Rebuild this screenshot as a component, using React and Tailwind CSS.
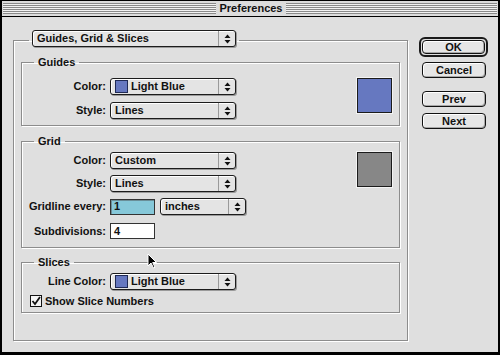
import React from 'react'

const font = { fontFamily: '"Liberation Sans", Arial, sans-serif' }

function Arrows() {
  return (
    <svg width="7" height="10" viewBox="0 0 7 10" className="block">
      <polygon points="0.5,4 3.5,0.5 6.5,4" fill="#111" />
      <polygon points="0.5,6 3.5,9.5 6.5,6" fill="#111" />
    </svg>
  )
}

function Popup({ width, swatch, children }) {
  return (
    <div
      className="h-[17px] flex items-stretch border border-[#1c1c1c] rounded-[3px] bg-[#e4e4e4] shadow-[inset_1px_1px_0_#fff,1px_1px_0_#9a9a9a]"
      style={{ width }}
    >
      <div className="flex-1 flex items-center pl-[4px] gap-[2px] text-[11px] font-bold text-[#111] leading-none">
        {swatch && <span className="w-[13px] h-[13px] bg-[#6678c0] border border-[#1f2a55] mr-[1px]" />}
        {children}
      </div>
      <div className="w-[17px] border-l border-[#9a9a9a] flex items-center justify-center">
        <Arrows />
      </div>
    </div>
  )
}

function Button({ children }) {
  return (
    <div className="h-[16px] w-[64px] border border-[#111] rounded-[4px] bg-[#e6e6e6] shadow-[inset_1px_1px_0_#fff,inset_-1px_-1px_0_#a8a8a8] flex items-center justify-center text-[11px] font-bold text-[#111] leading-none">
      {children}
    </div>
  )
}

function Row({ label, children, className = '' }) {
  return (
    <div className={`flex items-center ${className}`}>
      <div className="w-[85px] text-right text-[11px] font-bold text-[#111] leading-none pr-[1px]">{label}</div>
      <div className="ml-[3px] flex items-center">{children}</div>
    </div>
  )
}

function Group({ title, className = '', children }) {
  return (
    <fieldset className={`border border-[#8c8c8c] shadow-[1px_1px_0_#fff,inset_1px_1px_0_#fff] ${className}`}>
      <legend className="ml-[12px] px-[4px] text-[11px] font-bold text-[#111] leading-[13px] h-[13px]">{title}</legend>
      {children}
    </fieldset>
  )
}

function Swatch({ color }) {
  return (
    <div className={`w-[35px] h-[35px] border border-[#1b1b1b] shadow-[0_0_0_1px_#f4f4f4] ${color}`} />
  )
}

function TitleBar() {
  const stripes = 'bg-[image:repeating-linear-gradient(to_bottom,#8a8a8a_0,#8a8a8a_1px,#f2f2f2_1px,#f2f2f2_2px)]'
  return (
    <div className="h-[16px] border-b border-black bg-[#dcdcdc] flex items-center">
      <div className={`ml-[1px] w-[213px] h-[11px] ${stripes}`} />
      <div className="w-[70px] text-center text-[11px] font-bold text-[#111] leading-none">Preferences</div>
      <div className={`flex-1 mr-[1px] h-[11px] ${stripes}`} />
    </div>
  )
}

export default function App() {
  return (
    <div className="relative w-[500px] h-[355px] border-t border-x-2 border-b-[3px] border-black bg-[#dfdfdf] flex flex-col" style={font}>
      <TitleBar />
      <div className="flex flex-1">
        <fieldset className="ml-[11px] mt-[13px] w-[395px] h-[311px] px-[7px] border border-[#8c8c8c] shadow-[1px_1px_0_#fff,inset_1px_1px_0_#fff]">
          <legend className="ml-[8px] px-[3px] pb-[3px]">
            <Popup width={204}>Guides, Grid &amp; Slices</Popup>
          </legend>

          <Group title="Guides" className="mt-[6px] pt-[9px] pb-[6px]">
            <div className="flex">
              <div>
                <Row label="Color:"><Popup width={126} swatch>Light Blue</Popup></Row>
                <Row label="Style:" className="mt-[7px]"><Popup width={126}>Lines</Popup></Row>
              </div>
              <div className="ml-auto mr-[7px]">
                <Swatch color="bg-[#6678c0]" />
              </div>
            </div>
          </Group>

          <Group title="Grid" className="mt-[9px] pt-[4px] pb-[8px]">
            <div className="flex">
              <div>
                <Row label="Color:"><Popup width={126}>Custom</Popup></Row>
                <Row label="Style:" className="mt-[6px]"><Popup width={126}>Lines</Popup></Row>
                <Row label="Gridline every:" className="mt-[6px]">
                  <div className="w-[45px] h-[16px] border border-[#333] bg-[#86c8d9] shadow-[inset_1px_1px_0_#6a8e98] flex items-center pl-[3px] text-[11px] font-bold text-[#111] leading-none">1</div>
                  <div className="ml-[5px]"><Popup width={86}>inches</Popup></div>
                </Row>
                <Row label="Subdivisions:" className="mt-[8px]">
                  <div className="w-[45px] h-[16px] border border-[#333] bg-white flex items-center pl-[3px] text-[11px] font-bold text-[#111] leading-none">4</div>
                </Row>
              </div>
              <div className="ml-auto mr-[7px]">
                <Swatch color="bg-[#878787]" />
              </div>
            </div>
          </Group>

          <Group title="Slices" className="mt-[8px] pt-[4px] pb-[5px]">
            <Row label="Line Color:"><Popup width={126} swatch>Light Blue</Popup></Row>
            <div className="flex items-center mt-[5px] pl-[8px]">
              <div className="w-[12px] h-[12px] border border-[#111] bg-[#f4f4f4] flex items-center justify-center">
                <svg width="10" height="10" viewBox="0 0 10 10">
                  <path d="M1.5 5 L4 8 L9 1" fill="none" stroke="#111" strokeWidth="1.8" />
                </svg>
              </div>
              <span className="ml-[3px] text-[11px] font-bold text-[#111] leading-none">Show Slice Numbers</span>
            </div>
          </Group>
        </fieldset>

        <div className="ml-[11px] mt-[20px] w-[69px] flex flex-col">
          <div className="border-2 border-[#1a1a1a] rounded-[6px] p-[1px]">
            <div className="h-[14px] border border-[#111] rounded-[4px] bg-[#e6e6e6] shadow-[inset_1px_1px_0_#fff,inset_-1px_-1px_0_#a8a8a8] flex items-center justify-center text-[11px] font-bold text-[#111] leading-none">OK</div>
          </div>
          <div className="ml-[3px] mt-[5px]"><Button>Cancel</Button></div>
          <div className="ml-[3px] mt-[13px]"><Button>Prev</Button></div>
          <div className="ml-[3px] mt-[6px]"><Button>Next</Button></div>
        </div>
      </div>

      <svg className="absolute left-[145px] top-[252px]" width="11" height="16" viewBox="0 0 11 16">
        <path d="M1 1 L1 13 L4 10 L6.5 15 L8 14.3 L5.7 9.5 L9.5 9.5 Z" fill="#000" stroke="#fff" strokeWidth="1" />
      </svg>
    </div>
  )
}
